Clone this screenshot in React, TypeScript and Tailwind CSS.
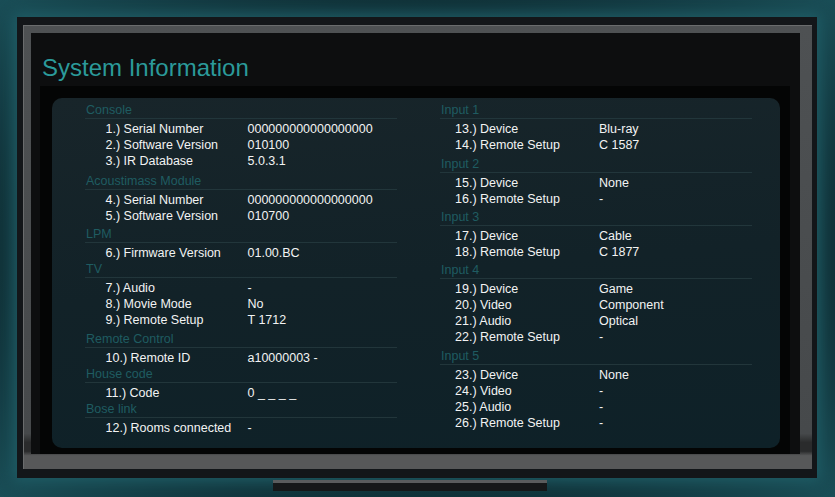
import React from "react";

type Row = [string, string];
type Section = { title: string; mt: string; rows: Row[] };

const Z = "000000000000000000";

const left: Section[] = [
  { title: "Console", mt: "mt-0", rows: [["1.) Serial Number", Z], ["2.) Software Version", "010100"], ["3.) IR Database", "5.0.3.1"]] },
  { title: "Acoustimass Module", mt: "mt-[4px]", rows: [["4.) Serial Number", Z], ["5.) Software Version", "010700"]] },
  { title: "LPM", mt: "mt-[2px]", rows: [["6.) Firmware Version", "01.00.BC"]] },
  { title: "TV", mt: "mt-0", rows: [["7.) Audio", "-"], ["8.) Movie Mode", "No"], ["9.) Remote Setup", "T 1712"]] },
  { title: "Remote Control", mt: "mt-[3px]", rows: [["10.) Remote ID", "a10000003 -"]] },
  { title: "House code", mt: "mt-0", rows: [["11.) Code", "0 _ _ _ _"]] },
  { title: "Bose link", mt: "mt-0", rows: [["12.) Rooms connected", "-"]] },
];

const right: Section[] = [
  { title: "Input 1", mt: "mt-0", rows: [["13.) Device", "Blu-ray"], ["14.) Remote Setup", "C 1587"]] },
  { title: "Input 2", mt: "mt-[3px]", rows: [["15.) Device", "None"], ["16.) Remote Setup", "-"]] },
  { title: "Input 3", mt: "mt-[2px]", rows: [["17.) Device", "Cable"], ["18.) Remote Setup", "C 1877"]] },
  { title: "Input 4", mt: "mt-[2px]", rows: [["19.) Device", "Game"], ["20.) Video", "Component"], ["21.) Audio", "Optical"], ["22.) Remote Setup", "-"]] },
  { title: "Input 5", mt: "mt-[3px]", rows: [["23.) Device", "None"], ["24.) Video", "-"], ["25.) Audio", "-"], ["26.) Remote Setup", "-"]] },
];

function Column({ sections, indent, labelW }: { sections: Section[]; indent: string; labelW: string }) {
  return (
    <div className="flex w-[312px] flex-col">
      {sections.map((s) => (
        <div key={s.title} className={s.mt}>
          <div className="mb-[2px] border-b border-[#22363b] pl-[1px] leading-[16px] text-[#1f5c61]">{s.title}</div>
          {s.rows.map(([l, v]) => (
            <div key={l} className={`flex leading-[16px] text-[#f2f3f3] ${indent}`}>
              <span className={`${labelW} shrink-0 whitespace-pre`}>{l}</span>
              <span className="whitespace-pre">{v}</span>
            </div>
          ))}
        </div>
      ))}
    </div>
  );
}

export default function App() {
  return (
    <div
      className="flex h-[497px] w-[835px] flex-col overflow-hidden bg-[radial-gradient(ellipse_at_center,#0b2329_55%,#1a4e57_100%)] pl-[17px] pt-[17px]"
      style={{ fontFamily: '"Liberation Sans", Arial, sans-serif' }}
    >
      <div className="h-[461px] w-[800px] bg-[#131619] pb-[9px] pl-[6px] pr-[5px] pt-[8px] shadow-[0_0_14px_4px_#1f5d66]">
        <div className="h-full w-full border-t border-l border-[#6a6c6d] bg-[linear-gradient(180deg,#4e5153_0%,#46494b_92%,#2a2b2c_94%,#2a2b2c_96%,#575859_97%)] pb-[15px] pl-[7px] pr-[12px] pt-[7px]">
          <div className="flex h-full w-full flex-col bg-[#0d0e0f]">
            <div className="h-[53px] pl-[11px] pt-[21px] text-[24px] leading-[28px] text-[#2b9a9a]">System Information</div>
            <div className="ml-[9px] mr-[10px] flex-1 bg-[#040505] pb-[6px] pl-[12px] pr-[10px] pt-[12px]">
              <div className="flex h-full rounded-[10px] bg-[linear-gradient(175deg,#18252a_0%,#122228_50%,#0e2128_100%)] pl-[33px] pt-[4px] text-[12.5px]">
                <Column sections={left} indent="pl-[20.5px]" labelW="w-[142px]" />
                <div className="w-[43px]" />
                <Column sections={right} indent="pl-[15px]" labelW="w-[144px]" />
              </div>
            </div>
          </div>
        </div>
      </div>
      <div className="ml-[256px] mt-[2px] h-[11px] w-[274px] border-t-[3px] border-[#5a5c5d] bg-[#161819]" />
    </div>
  );
}
